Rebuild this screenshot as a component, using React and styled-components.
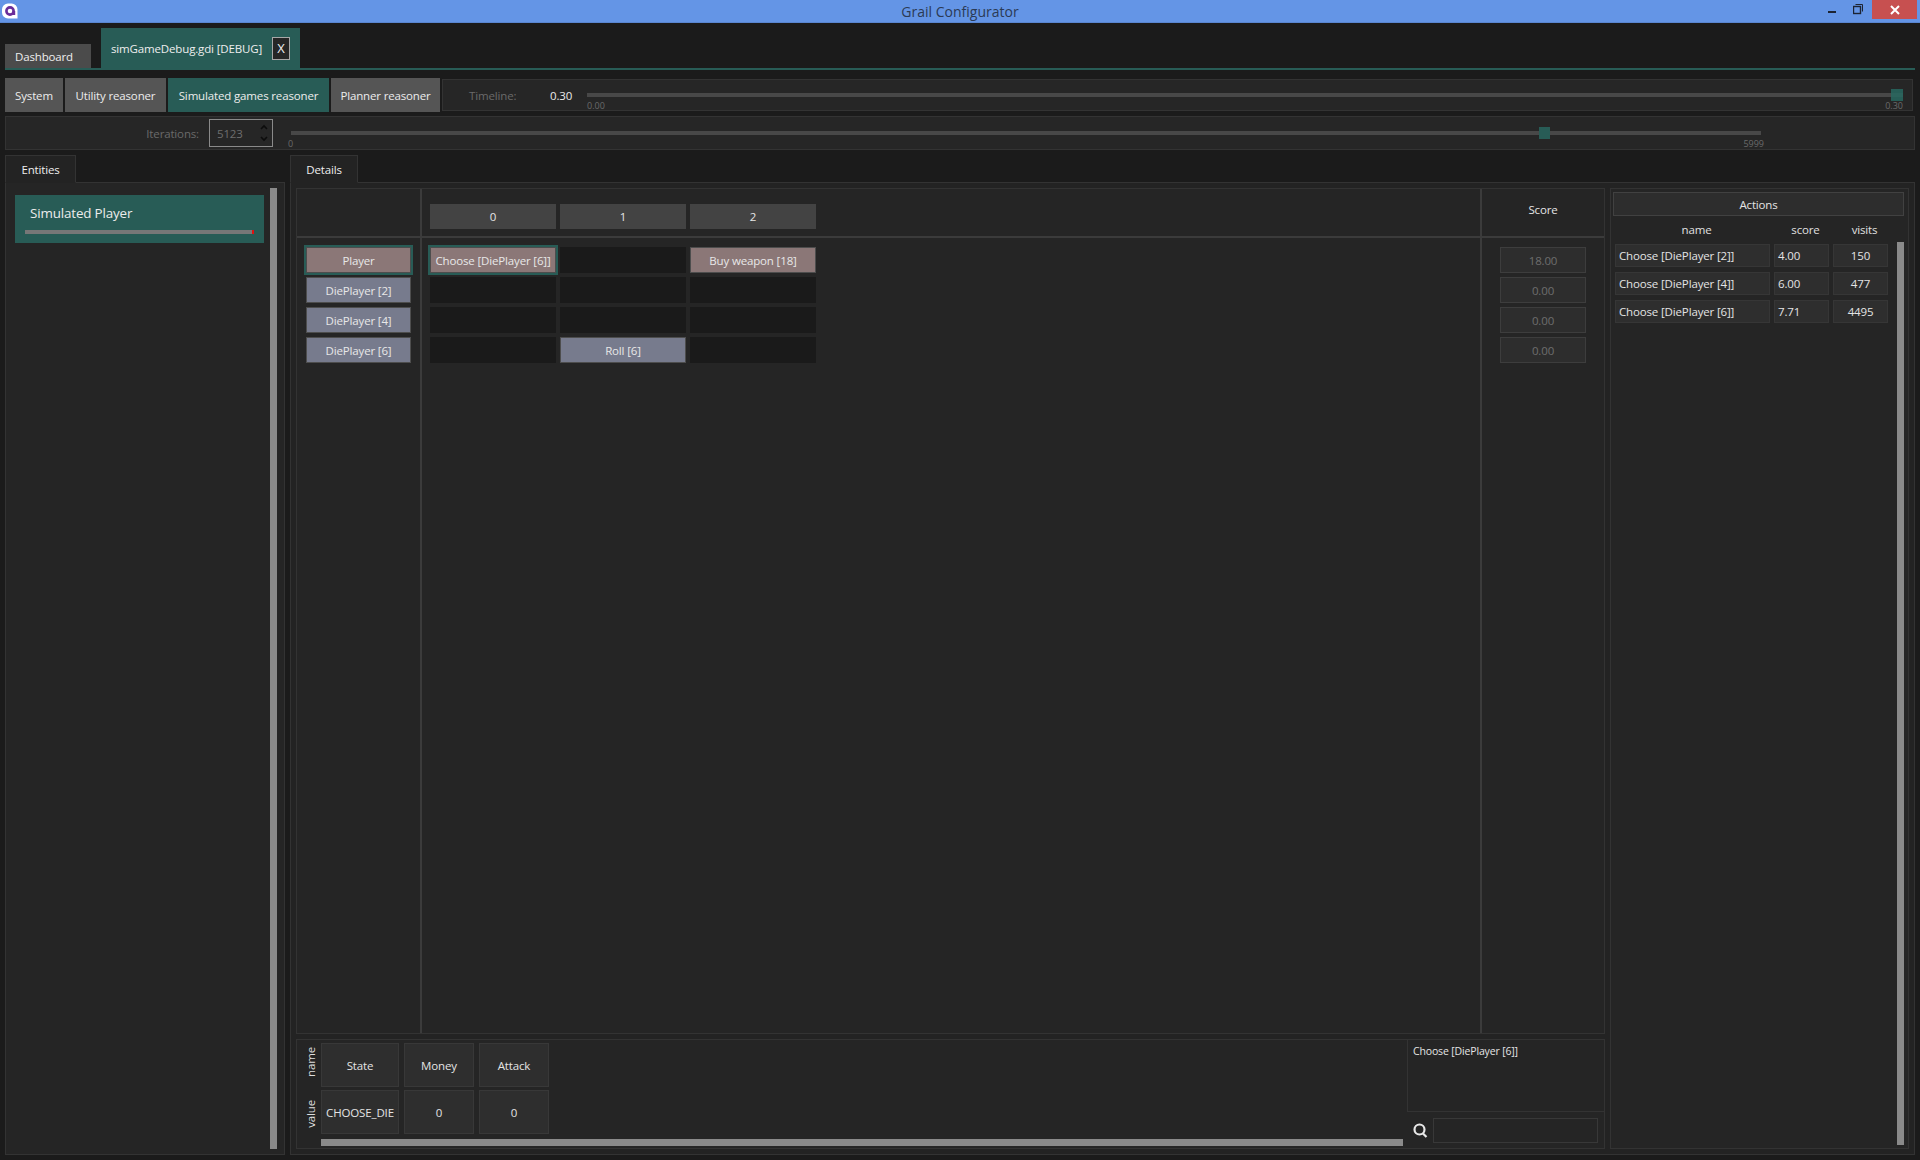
import React from 'react';
import styled, { createGlobalStyle } from 'styled-components';

const teal = '#285c56';

const GlobalStyle = createGlobalStyle`
  html, body {
    margin: 0;
    padding: 0;
    background: #1b1b1b;
  }
  * {
    box-sizing: border-box;
  }
`;

const Window = styled.div`
  width: 1920px;
  height: 1160px;
  overflow: hidden;
  display: flex;
  flex-direction: column;
  background: #1b1b1b;
  color: #e2e2e2;
  font-family: "Open Sans", "Noto Sans", sans-serif;
  font-size: 11.5px;
  letter-spacing: -0.15px;
`;

const TitleBar = styled.div`
  height: 23px;
  flex: none;
  position: relative;
  display: flex;
  align-items: center;
  justify-content: center;
  background: #6495e6;
  border-bottom: 1px solid #5a86d0;
`;

const TitleText = styled.div`
  font-size: 14px;
  letter-spacing: 0;
  color: #2b3a55;
`;

const AppIcon = styled.svg`
  position: absolute;
  left: 2px;
  top: 3px;
`;

const WindowButtons = styled.div`
  position: absolute;
  top: 0;
  right: 3px;
  display: flex;
  align-items: flex-start;
`;

const WinButton = styled.div`
  width: ${(p) => p.$w}px;
  height: 19px;
  display: flex;
  align-items: center;
  justify-content: ${(p) => (p.$close ? 'center' : 'flex-start')};
  background: ${(p) => (p.$close ? '#c75050' : 'transparent')};
`;

const TabStrip = styled.div`
  height: 47px;
  flex: none;
  margin: 0 5px;
  display: flex;
  align-items: flex-end;
  gap: 10px;
  border-bottom: 2px solid ${teal};
`;

const FileTab = styled.div`
  display: flex;
  align-items: ${(p) => (p.$active ? 'center' : 'flex-end')};
  justify-content: space-between;
  height: ${(p) => (p.$active ? 40 : 24)}px;
  padding: ${(p) => (p.$active ? '0 10px' : '0 10px 4px')};
  width: ${(p) => p.$w}px;
  background: ${(p) => (p.$active ? teal : '#4b4b4b')};
  color: #eee;
  white-space: nowrap;
`;

const CloseBox = styled.div`
  flex: none;
  width: 18px;
  height: 23px;
  display: flex;
  align-items: center;
  justify-content: center;
  background: #262626;
  border: 1px solid #a8a8a8;
  font-size: 13px;
  color: #eee;
`;

const ToolRow = styled.div`
  display: flex;
  align-items: flex-start;
  gap: 2px;
  height: 34px;
  margin: 8px 7px 0 5px;
`;

const ReasonerButton = styled.div`
  height: 34px;
  width: ${(p) => p.$w}px;
  display: flex;
  align-items: center;
  justify-content: center;
  background: ${(p) => (p.$active ? teal : '#555555')};
  color: #ececec;
  white-space: nowrap;
`;

const SliderPanel = styled.div`
  display: flex;
  align-items: center;
  background: #262626;
  border: 1px solid #333333;
`;

const TimelinePanel = styled(SliderPanel)`
  flex: 1;
  height: 32px;
  margin: 1px 0 0 0;
  padding: 0 9px 0 26px;
`;

const IterationsPanel = styled(SliderPanel)`
  height: 34px;
  margin: 4px 5px 0;
`;

const DimLabel = styled.div`
  color: #6a6a6a;
`;

const TimelineLabel = styled(DimLabel)`
  width: 81px;
`;

const TimelineValue = styled.div`
  width: 37px;
  color: #eaeaea;
`;

const IterationsLabel = styled(DimLabel)`
  width: 193px;
  text-align: right;
`;

const Spinner = styled.div`
  width: 64px;
  height: 28px;
  margin: 0 18px 0 10px;
  padding: 0 4px 0 7px;
  display: flex;
  align-items: center;
  justify-content: space-between;
  border: 1px solid #8a8a8a;
  color: #6e6e6e;
`;

const SpinArrows = styled.svg`
  flex: none;
`;

const Slider = styled.div`
  position: relative;
  width: ${(p) => p.$w}px;
  padding-top: 14px;
`;

const Track = styled.div`
  height: 4px;
  background: #484848;
`;

const Handle = styled.div`
  position: absolute;
  top: 10px;
  width: ${(p) => p.$size}px;
  height: 12px;
  background: ${(p) => (p.$ghost ? 'rgba(40, 104, 96, 0.85)' : teal)};
`;

const SliderScale = styled.div`
  display: flex;
  justify-content: space-between;
  margin: 3px ${(p) => p.$bleed}px 0;
  font-size: 9px;
  line-height: 11px;
  letter-spacing: 0;
  color: #6a6a6a;
`;

const Content = styled.div`
  flex: 1;
  min-height: 0;
  display: flex;
  gap: 5px;
  margin: 5px 5px 5px;
`;

const TabbedColumn = styled.div`
  display: flex;
  flex-direction: column;
  flex: ${(p) => (p.$w ? `0 0 ${p.$w}px` : 1)};
  min-width: 0;
`;

const ColumnTab = styled.div`
  width: ${(p) => p.$w}px;
  height: 28px;
  margin-bottom: -1px;
  position: relative;
  z-index: 1;
  display: flex;
  align-items: center;
  justify-content: center;
  background: #232323;
  border: 1px solid #333333;
  border-bottom-color: #232323;
  color: #eee;
`;

const ColumnBody = styled.div`
  flex: 1;
  min-height: 0;
  display: flex;
  background: #232323;
  border: 1px solid #333333;
`;

const EntityPane = styled(ColumnBody)`
  padding: 5px 7px 5px 9px;
  gap: 6px;
  background: #252525;
`;

const EntityList = styled.div`
  flex: 1;
  padding-top: 7px;
`;

const EntityCard = styled.div`
  height: 48px;
  padding: 9px 10px 0;
  background: ${teal};
  color: #ececec;
`;

const EntityName = styled.div`
  font-size: 13.4px;
  line-height: 19px;
  padding-left: 5px;
`;

const EntityBar = styled.div`
  height: 4px;
  margin-top: 7px;
  background: linear-gradient(to right, #777 calc(100% - 2px), #e01010 calc(100% - 2px));
`;

const Scrollbar = styled.div`
  flex: none;
  width: 7px;
  background: #8a8a8a;
`;

const DetailsPane = styled(ColumnBody)`
  padding: 5px;
  gap: 5px;
`;

const MainColumn = styled.div`
  flex: 1;
  min-width: 0;
  display: flex;
  flex-direction: column;
  gap: 5px;
`;

const Board = styled.div`
  flex: 1;
  min-height: 0;
  display: grid;
  grid-template-columns: 125px 1fr 122px;
  grid-template-rows: 49px 1fr;
  background: #252525;
  border: 1px solid #333333;
`;

const BoardCell = styled.div`
  display: flex;
  min-width: 0;
  border-right: ${(p) => (p.$last ? 'none' : '2px solid #3b3b3b')};
  border-bottom: ${(p) => (p.$head ? '2px solid #3b3b3b' : 'none')};
`;

const ColumnHeads = styled(BoardCell)`
  padding: 15px 0 0 8px;
  gap: 4px;
`;

const ColumnHead = styled.div`
  width: 126px;
  height: 25px;
  display: flex;
  align-items: center;
  justify-content: center;
  background: #434343;
  color: #e6e6e6;
`;

const ScoreHead = styled(BoardCell)`
  align-items: center;
  justify-content: center;
  padding-bottom: 7px;
  color: #e6e6e6;
`;

const CellStack = styled(BoardCell)`
  flex-direction: column;
  gap: 4px;
  padding: 9px 0 0 ${(p) => p.$left}px;
`;

const Rows = styled(CellStack)`
  padding: 9px 0 0 8px;
`;

const MoveRow = styled.div`
  display: flex;
  gap: 4px;
`;

const Chip = styled.div`
  width: ${(p) => p.$w || 126}px;
  height: 26px;
  display: flex;
  align-items: center;
  justify-content: center;
  white-space: nowrap;
  color: #e8e8e8;
  background: ${(p) => (p.$kind === 'player' ? '#8b7777' : '#777b8d')};
  border: 1px solid #4d4d4d;
  box-shadow: ${(p) => (p.$picked ? `0 0 0 2px ${teal}` : 'none')};
`;

const EmptyCell = styled.div`
  width: 126px;
  height: 26px;
  background: #1a1a1a;
`;

const ScoreBox = styled.div`
  width: 86px;
  height: 26px;
  display: flex;
  align-items: center;
  justify-content: center;
  background: #2d2d2d;
  border: 1px solid #3d3d3d;
  color: #6e6e6e;
`;

const StatePanel = styled.div`
  flex: 0 0 110px;
  display: flex;
  background: #252525;
  border: 1px solid #333333;
`;

const StateArea = styled.div`
  flex: 1;
  min-width: 0;
  display: grid;
  grid-template-columns: 24px 1fr;
  grid-template-rows: 44px 44px 7px;
  row-gap: 3px;
  padding-top: 3px;
`;

const SideLabel = styled.div`
  writing-mode: vertical-rl;
  transform: rotate(180deg);
  justify-self: end;
  align-self: start;
  margin: ${(p) => p.$top}px 3px 0 0;
  line-height: 14px;
  color: #dedede;
`;

const StateRow = styled.div`
  display: flex;
  gap: 5px;
`;

const StateCell = styled.div`
  width: ${(p) => p.$w}px;
  display: flex;
  align-items: center;
  justify-content: center;
  white-space: nowrap;
  background: #2e2e2e;
  border: 1px solid #383838;
  color: #e4e4e4;
`;

const HorizontalBar = styled.div`
  grid-column: 2;
  margin: 2px 4px 0 0;
  height: 7px;
  background: #8a8a8a;
`;

const InfoSide = styled.div`
  flex: 0 0 197px;
  display: flex;
  flex-direction: column;
`;

const InfoText = styled.div`
  height: 72px;
  padding: 4px 5px;
  font-size: 10.5px;
  border-left: 1px solid #333333;
  border-bottom: 1px solid #333333;
  color: #e4e4e4;
`;

const SearchRow = styled.div`
  flex: 1;
  display: flex;
  align-items: center;
  gap: 5px;
  padding: 0 6px;
`;

const SearchInput = styled.div`
  width: 165px;
  height: 25px;
  border: 1px solid #383838;
`;

const ActionsPanel = styled.div`
  flex: 0 0 299px;
  display: flex;
  flex-direction: column;
  padding: 3px 4px 3px 2px;
  background: #252525;
  border: 1px solid #333333;
`;

const ActionsTitle = styled.div`
  height: 24px;
  display: flex;
  align-items: center;
  justify-content: center;
  background: #2d2d2d;
  border: 1px solid #414141;
  color: #e4e4e4;
`;

const ActionGrid = styled.div`
  display: grid;
  grid-template-columns: 155px 55px 55px;
  column-gap: 4px;
`;

const ActionsHead = styled(ActionGrid)`
  height: 26px;
  align-items: center;
  padding-left: 6px;
  justify-items: center;
  color: #e0e0e0;
`;

const ActionsBody = styled.div`
  flex: 1;
  min-height: 0;
  display: flex;
  justify-content: space-between;
  padding-left: 2px;
`;

const ActionsRows = styled.div`
  display: flex;
  flex-direction: column;
  gap: 5px;
  padding-top: 2px;
`;

const ActionCell = styled.div`
  height: 23px;
  padding: 0 ${(p) => (p.$center ? 0 : 3)}px;
  display: flex;
  align-items: center;
  justify-content: ${(p) => (p.$center ? 'center' : 'flex-start')};
  white-space: nowrap;
  background: #2e2e2e;
  border: 1px solid #363636;
  color: #e4e4e4;
`;

const players = [
  { name: 'Player', kind: 'player', picked: true, score: '18.00' },
  { name: 'DiePlayer [2]', kind: 'die', score: '0.00' },
  { name: 'DiePlayer [4]', kind: 'die', score: '0.00' },
  { name: 'DiePlayer [6]', kind: 'die', score: '0.00' },
];

const moves = [
  [{ name: 'Choose [DiePlayer [6]]', kind: 'player', picked: true }, null, { name: 'Buy weapon [18]', kind: 'player' }],
  [null, null, null],
  [null, null, null],
  [null, { name: 'Roll [6]', kind: 'die' }, null],
];

const actions = [
  ['Choose [DiePlayer [2]]', '4.00', '150'],
  ['Choose [DiePlayer [4]]', '6.00', '477'],
  ['Choose [DiePlayer [6]]', '7.71', '4495'],
];

const App = () => (
  <Window>
    <GlobalStyle />
    <TitleBar>
      <AppIcon width="16" height="16" viewBox="0 0 16 16">
        <path d="M6 0.5h3.5a6 6 0 0 1 6 6v9h-9.5a6 6 0 0 1-6-6v-3a6 6 0 0 1 6-6z" fill="#ffffff" />
        <circle cx="8" cy="8" r="3.6" fill="none" stroke="#6a2d9a" strokeWidth="2.6" />
        <rect x="10.6" y="8" width="2.6" height="4" fill="#6a2d9a" />
      </AppIcon>
      <TitleText>Grail Configurator</TitleText>
      <WindowButtons>
        <WinButton $w={25}>
          <svg width="9" height="19" viewBox="0 0 9 19"><rect x="0" y="11" width="8" height="2" fill="#1c2433" /></svg>
        </WinButton>
        <WinButton $w={19}>
          <svg width="11" height="19" viewBox="0 0 11 19" fill="none" stroke="#1c2433">
            <rect x="0.5" y="6.5" width="7" height="7" strokeWidth="1.4" />
            <path d="M2.5 4.5h7v7" />
          </svg>
        </WinButton>
        <WinButton $w={45} $close>
          <svg width="10" height="10" viewBox="0 0 10 10" stroke="#ffffff" strokeWidth="2"><path d="M1 1l8 8M9 1l-8 8" /></svg>
        </WinButton>
      </WindowButtons>
    </TitleBar>

    <TabStrip>
      <FileTab $w={86}>Dashboard</FileTab>
      <FileTab $w={199} $active>
        simGameDebug.gdi [DEBUG]
        <CloseBox>X</CloseBox>
      </FileTab>
    </TabStrip>

    <ToolRow>
      <ReasonerButton $w={58}>System</ReasonerButton>
      <ReasonerButton $w={101}>Utility reasoner</ReasonerButton>
      <ReasonerButton $w={161} $active>Simulated games reasoner</ReasonerButton>
      <ReasonerButton $w={109}>Planner reasoner</ReasonerButton>
      <TimelinePanel>
        <TimelineLabel>Timeline:</TimelineLabel>
        <TimelineValue>0.30</TimelineValue>
        <Slider $w={1316}>
          <Track />
          <Handle $size={12} $ghost style={{ left: 1304 }} />
          <SliderScale $bleed={0}>
            <span>0.00</span>
            <span>0.30</span>
          </SliderScale>
        </Slider>
      </TimelinePanel>
    </ToolRow>

    <IterationsPanel>
      <IterationsLabel>Iterations:</IterationsLabel>
      <Spinner>
        5123
        <SpinArrows width="8" height="20" viewBox="0 0 8 20" fill="none" stroke="#0c0c0c" strokeWidth="1.6">
          <path d="M1 6l3-3 3 3M1 14l3 3 3-3" />
        </SpinArrows>
      </Spinner>
      <Slider $w={1470}>
        <Track />
        <Handle $size={11} style={{ left: 1248 }} />
        <SliderScale $bleed={-3}>
          <span>0</span>
          <span>5999</span>
        </SliderScale>
      </Slider>
    </IterationsPanel>

    <Content>
      <TabbedColumn $w={280}>
        <ColumnTab $w={71}>Entities</ColumnTab>
        <EntityPane>
          <EntityList>
            <EntityCard>
              <EntityName>Simulated Player</EntityName>
              <EntityBar />
            </EntityCard>
          </EntityList>
          <Scrollbar />
        </EntityPane>
      </TabbedColumn>

      <TabbedColumn>
        <ColumnTab $w={68}>Details</ColumnTab>
        <DetailsPane>
          <MainColumn>
            <Board>
              <BoardCell $head />
              <ColumnHeads $head>
                {[0, 1, 2].map((n) => <ColumnHead key={n}>{n}</ColumnHead>)}
              </ColumnHeads>
              <ScoreHead $head $last>Score</ScoreHead>

              <CellStack $left={9}>
                {players.map((p) => (
                  <Chip key={p.name} $w={105} $kind={p.kind} $picked={p.picked}>{p.name}</Chip>
                ))}
              </CellStack>
              <Rows>
                {moves.map((row, i) => (
                  <MoveRow key={i}>
                    {row.map((m, j) => (m
                      ? <Chip key={j} $kind={m.kind} $picked={m.picked}>{m.name}</Chip>
                      : <EmptyCell key={j} />))}
                  </MoveRow>
                ))}
              </Rows>
              <CellStack $left={18} $last>
                {players.map((p) => <ScoreBox key={p.name}>{p.score}</ScoreBox>)}
              </CellStack>
            </Board>

            <StatePanel>
              <StateArea>
                <SideLabel $top={4}>name</SideLabel>
                <StateRow>
                  <StateCell $w={78}>State</StateCell>
                  <StateCell $w={70}>Money</StateCell>
                  <StateCell $w={70}>Attack</StateCell>
                </StateRow>
                <SideLabel $top={10}>value</SideLabel>
                <StateRow>
                  <StateCell $w={78}>CHOOSE_DIE</StateCell>
                  <StateCell $w={70}>0</StateCell>
                  <StateCell $w={70}>0</StateCell>
                </StateRow>
                <HorizontalBar />
              </StateArea>
              <InfoSide>
                <InfoText>Choose [DiePlayer [6]]</InfoText>
                <SearchRow>
                  <svg width="15" height="15" viewBox="0 0 15 15" fill="none" stroke="#e8e8e8" strokeWidth="2.2">
                    <circle cx="6.5" cy="6.5" r="5" />
                    <path d="M10 10.5l3.5 3.5" />
                  </svg>
                  <SearchInput />
                </SearchRow>
              </InfoSide>
            </StatePanel>
          </MainColumn>

          <ActionsPanel>
            <ActionsTitle>Actions</ActionsTitle>
            <ActionsHead>
              <span>name</span>
              <span>score</span>
              <span>visits</span>
            </ActionsHead>
            <ActionsBody>
              <ActionsRows>
                {actions.map((a) => (
                  <ActionGrid key={a[0]}>
                    <ActionCell>{a[0]}</ActionCell>
                    <ActionCell>{a[1]}</ActionCell>
                    <ActionCell $center>{a[2]}</ActionCell>
                  </ActionGrid>
                ))}
              </ActionsRows>
              <Scrollbar />
            </ActionsBody>
          </ActionsPanel>
        </DetailsPane>
      </TabbedColumn>
    </Content>
  </Window>
);

export default App;
